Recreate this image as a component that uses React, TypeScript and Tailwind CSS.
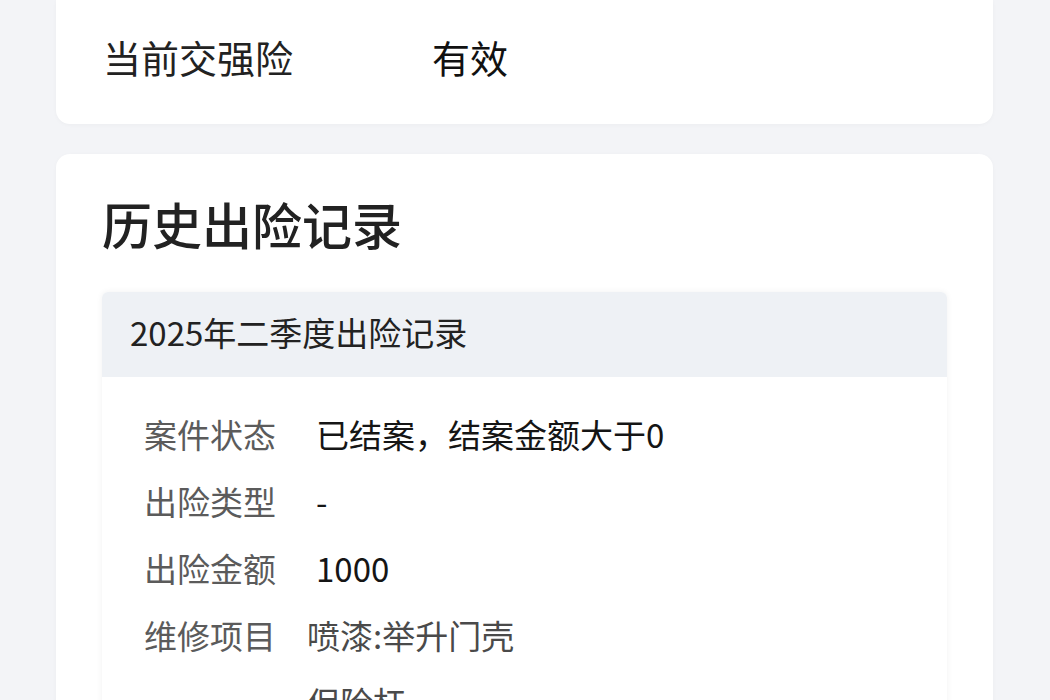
const rows = [
  { label: '案件状态', value: '已结案，结案金额大于0' },
  { label: '出险类型', value: '-' },
  { label: '出险金额', value: '1000' },
]

const repairs = ['喷漆:举升门壳', '保险杠']

export default function App() {
  return (
    <div
      className="min-h-screen bg-[#f3f4f7] pl-[56px] pr-[57px] pb-10 overflow-hidden"
      style={{ fontFamily: '"Noto Sans CJK SC", "Noto Sans", sans-serif' }}
    >
      {/* 交强险 */}
      <div className="bg-white rounded-b-[14px] h-[124px] px-[47px] pt-[31px] shadow-[0_1px_4px_rgba(0,0,0,0.03)]">
        <div className="flex items-center text-[38px] leading-[52px] text-[#222]">
          <span className="w-[329px]">当前交强险</span>
          <span className="text-[#111]">有效</span>
        </div>
      </div>

      {/* 历史出险记录 */}
      <div className="mt-[30px] bg-white rounded-[14px] px-[46px] pt-[34px] pb-10 shadow-[0_1px_4px_rgba(0,0,0,0.03)]">
        <h2 className="text-[50px] leading-[70px] font-medium text-[#222]">历史出险记录</h2>

        <div className="mt-[34px] rounded-[6px] overflow-hidden shadow-[0_0_6px_rgba(0,0,0,0.06)]">
          <div className="h-[85px] bg-[#eef1f5] px-[28px] pb-[4px] flex items-center text-[33px] text-[#222]">
            2025年二季度出险记录
          </div>
          <div className="bg-white px-[42px] pt-[24px] pb-6">
            {rows.map((r) => (
              <div key={r.label} className="flex items-center h-[67px] text-[33px]">
                <span className="w-[172px] text-[#5b5b5b]">{r.label}</span>
                <span className="text-[#151515]">{r.value}</span>
              </div>
            ))}
            <div className="flex text-[33px]">
              <span className="w-[172px] shrink-0 h-[67px] flex items-center text-[#5b5b5b]">维修项目</span>
              <div className="-ml-[9px] flex flex-col">
                {repairs.map((p) => (
                  <span key={p} className="h-[67px] flex items-center text-[#4a4a4a]">
                    {p}
                  </span>
                ))}
              </div>
            </div>
          </div>
        </div>
      </div>
    </div>
  )
}
